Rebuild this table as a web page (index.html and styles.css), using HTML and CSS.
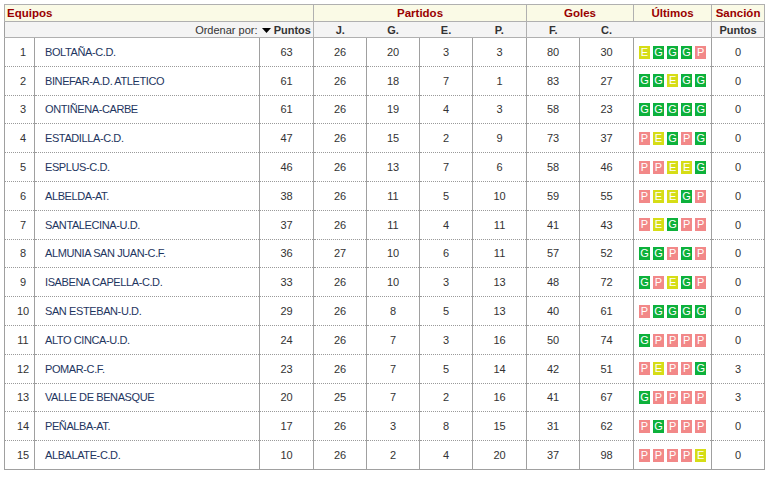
FILE: index.html
```html
<!DOCTYPE html>
<html lang="es">
<head>
<meta charset="utf-8">
<title>Clasificación</title>
<link rel="stylesheet" href="styles.css">
</head>
<body>
<table class="standings">
  <colgroup>
    <col class="c-pos"><col class="c-name"><col class="c-pts">
    <col class="c-num"><col class="c-num"><col class="c-num"><col class="c-numw">
    <col class="c-num"><col class="c-numw"><col class="c-last"><col class="c-num">
  </colgroup>
  <thead>
    <tr class="group-row">
      <th colspan="3" class="left">Equipos</th>
      <th colspan="4">Partidos</th>
      <th colspan="2">Goles</th>
      <th>Últimos</th>
      <th>Sanción</th>
    </tr>
    <tr class="sub-row">
      <th colspan="2" class="order">Ordenar por:</th>
      <th class="sort"><svg class="arrow" width="9" height="5" viewBox="0 0 9 5"><path d="M0 0H9L4.5 5Z" fill="#000"/></svg> Puntos</th>
      <th class="sep">J.</th>
      <th>G.</th>
      <th>E.</th>
      <th>P.</th>
      <th class="sep">F.</th>
      <th>C.</th>
      <th></th>
      <th class="sep">Puntos</th>
    </tr>
  </thead>
  <tbody>
    <tr><td class="pos">1</td><td class="name">BOLTAÑA-C.D.</td><td>63</td><td>26</td><td>20</td><td>3</td><td>3</td><td>80</td><td>30</td><td class="last"><span class="b e">E</span> <span class="b g">G</span> <span class="b g">G</span> <span class="b g">G</span> <span class="b p">P</span></td><td>0</td></tr>
    <tr><td class="pos">2</td><td class="name">BINEFAR-A.D. ATLETICO</td><td>61</td><td>26</td><td>18</td><td>7</td><td>1</td><td>83</td><td>27</td><td class="last"><span class="b g">G</span> <span class="b g">G</span> <span class="b e">E</span> <span class="b g">G</span> <span class="b g">G</span></td><td>0</td></tr>
    <tr><td class="pos">3</td><td class="name">ONTIÑENA-CARBE</td><td>61</td><td>26</td><td>19</td><td>4</td><td>3</td><td>58</td><td>23</td><td class="last"><span class="b g">G</span> <span class="b g">G</span> <span class="b g">G</span> <span class="b g">G</span> <span class="b g">G</span></td><td>0</td></tr>
    <tr><td class="pos">4</td><td class="name">ESTADILLA-C.D.</td><td>47</td><td>26</td><td>15</td><td>2</td><td>9</td><td>73</td><td>37</td><td class="last"><span class="b p">P</span> <span class="b e">E</span> <span class="b g">G</span> <span class="b p">P</span> <span class="b g">G</span></td><td>0</td></tr>
    <tr><td class="pos">5</td><td class="name">ESPLUS-C.D.</td><td>46</td><td>26</td><td>13</td><td>7</td><td>6</td><td>58</td><td>46</td><td class="last"><span class="b p">P</span> <span class="b p">P</span> <span class="b e">E</span> <span class="b e">E</span> <span class="b g">G</span></td><td>0</td></tr>
    <tr><td class="pos">6</td><td class="name">ALBELDA-AT.</td><td>38</td><td>26</td><td>11</td><td>5</td><td>10</td><td>59</td><td>55</td><td class="last"><span class="b p">P</span> <span class="b e">E</span> <span class="b e">E</span> <span class="b g">G</span> <span class="b p">P</span></td><td>0</td></tr>
    <tr><td class="pos">7</td><td class="name">SANTALECINA-U.D.</td><td>37</td><td>26</td><td>11</td><td>4</td><td>11</td><td>41</td><td>43</td><td class="last"><span class="b p">P</span> <span class="b e">E</span> <span class="b g">G</span> <span class="b p">P</span> <span class="b p">P</span></td><td>0</td></tr>
    <tr><td class="pos">8</td><td class="name">ALMUNIA SAN JUAN-C.F.</td><td>36</td><td>27</td><td>10</td><td>6</td><td>11</td><td>57</td><td>52</td><td class="last"><span class="b g">G</span> <span class="b g">G</span> <span class="b p">P</span> <span class="b g">G</span> <span class="b p">P</span></td><td>0</td></tr>
    <tr><td class="pos">9</td><td class="name">ISABENA CAPELLA-C.D.</td><td>33</td><td>26</td><td>10</td><td>3</td><td>13</td><td>48</td><td>72</td><td class="last"><span class="b g">G</span> <span class="b p">P</span> <span class="b e">E</span> <span class="b g">G</span> <span class="b p">P</span></td><td>0</td></tr>
    <tr><td class="pos">10</td><td class="name">SAN ESTEBAN-U.D.</td><td>29</td><td>26</td><td>8</td><td>5</td><td>13</td><td>40</td><td>61</td><td class="last"><span class="b p">P</span> <span class="b g">G</span> <span class="b g">G</span> <span class="b g">G</span> <span class="b g">G</span></td><td>0</td></tr>
    <tr><td class="pos">11</td><td class="name">ALTO CINCA-U.D.</td><td>24</td><td>26</td><td>7</td><td>3</td><td>16</td><td>50</td><td>74</td><td class="last"><span class="b g">G</span> <span class="b p">P</span> <span class="b p">P</span> <span class="b p">P</span> <span class="b p">P</span></td><td>0</td></tr>
    <tr><td class="pos">12</td><td class="name">POMAR-C.F.</td><td>23</td><td>26</td><td>7</td><td>5</td><td>14</td><td>42</td><td>51</td><td class="last"><span class="b p">P</span> <span class="b e">E</span> <span class="b p">P</span> <span class="b p">P</span> <span class="b g">G</span></td><td>3</td></tr>
    <tr><td class="pos">13</td><td class="name">VALLE DE BENASQUE</td><td>20</td><td>25</td><td>7</td><td>2</td><td>16</td><td>41</td><td>67</td><td class="last"><span class="b g">G</span> <span class="b p">P</span> <span class="b p">P</span> <span class="b p">P</span> <span class="b p">P</span></td><td>3</td></tr>
    <tr><td class="pos">14</td><td class="name">PEÑALBA-AT.</td><td>17</td><td>26</td><td>3</td><td>8</td><td>15</td><td>31</td><td>62</td><td class="last"><span class="b p">P</span> <span class="b g">G</span> <span class="b p">P</span> <span class="b p">P</span> <span class="b p">P</span></td><td>0</td></tr>
    <tr><td class="pos">15</td><td class="name">ALBALATE-C.D.</td><td>10</td><td>26</td><td>2</td><td>4</td><td>20</td><td>37</td><td>98</td><td class="last"><span class="b p">P</span> <span class="b p">P</span> <span class="b p">P</span> <span class="b p">P</span> <span class="b e">E</span></td><td>0</td></tr>
  </tbody>
</table>
</body>
</html>
```
FILE: styles.css
```css
html, body {
  margin: 0;
  padding: 0;
  background: #fff;
}
body {
  font-family: "Liberation Sans", Arial, sans-serif;
  font-size: 11px;
  color: #333;
}
.standings {
  margin: 4px;
  width: 760px;
  border-collapse: collapse;
  table-layout: fixed;
  border: 1px solid #a0a0a0;
}
.c-pos { width: 30px; }
.c-name { width: 225px; }
.c-pts { width: 54px; }
.c-num { width: 53px; }
.c-numw { width: 54px; }
.c-last { width: 78px; }

th {
  padding: 0 2px;
  white-space: nowrap;
}
.group-row th {
  height: 16px;
  background: #fafae6;
  color: #990000;
  font-size: 11.5px;
  font-weight: bold;
  text-align: center;
  border: 1px solid #b0b0b0;
  line-height: 14px;
}
.group-row th.left {
  text-align: left;
  padding-left: 2px;
}
.sub-row th {
  height: 15px;
  background: #f4f4f4;
  color: #333;
  font-weight: bold;
  text-align: center;
  line-height: 14px;
  border-bottom: 1px solid #b0b0b0;
}
.sub-row th.order {
  text-align: right;
  font-weight: normal;
  padding-right: 2px;
}
.sub-row th.sort {
  border-right: 1px solid #b0b0b0;
}
.sub-row th.sep {
  border-left: 1px solid #b0b0b0;
}
.arrow {
  vertical-align: 1px;
}

td {
  height: 27.8px;
  padding: 0 2px;
  text-align: center;
  color: #333;
  border-left: 1px solid #a0a0a0;
  border-bottom: 1px dotted #9a9a9a;
  white-space: nowrap;
}
td.pos {
  padding-left: 9px;
}
td.name {
  text-align: left;
  padding-left: 10px;
  color: #1e3560;
  letter-spacing: -0.4px;
}
td.last {
  font-size: 11px;
}
.b {
  display: inline-block;
  width: 11px;
  height: 13px;
  line-height: 13px;
  color: #fff;
  font-size: 11px;
  text-align: center;
  vertical-align: middle;
}
.b.g { background: #0db13b; }
.b.p { background: #f28888; }
.b.e { background: #d6dd16; }
```
